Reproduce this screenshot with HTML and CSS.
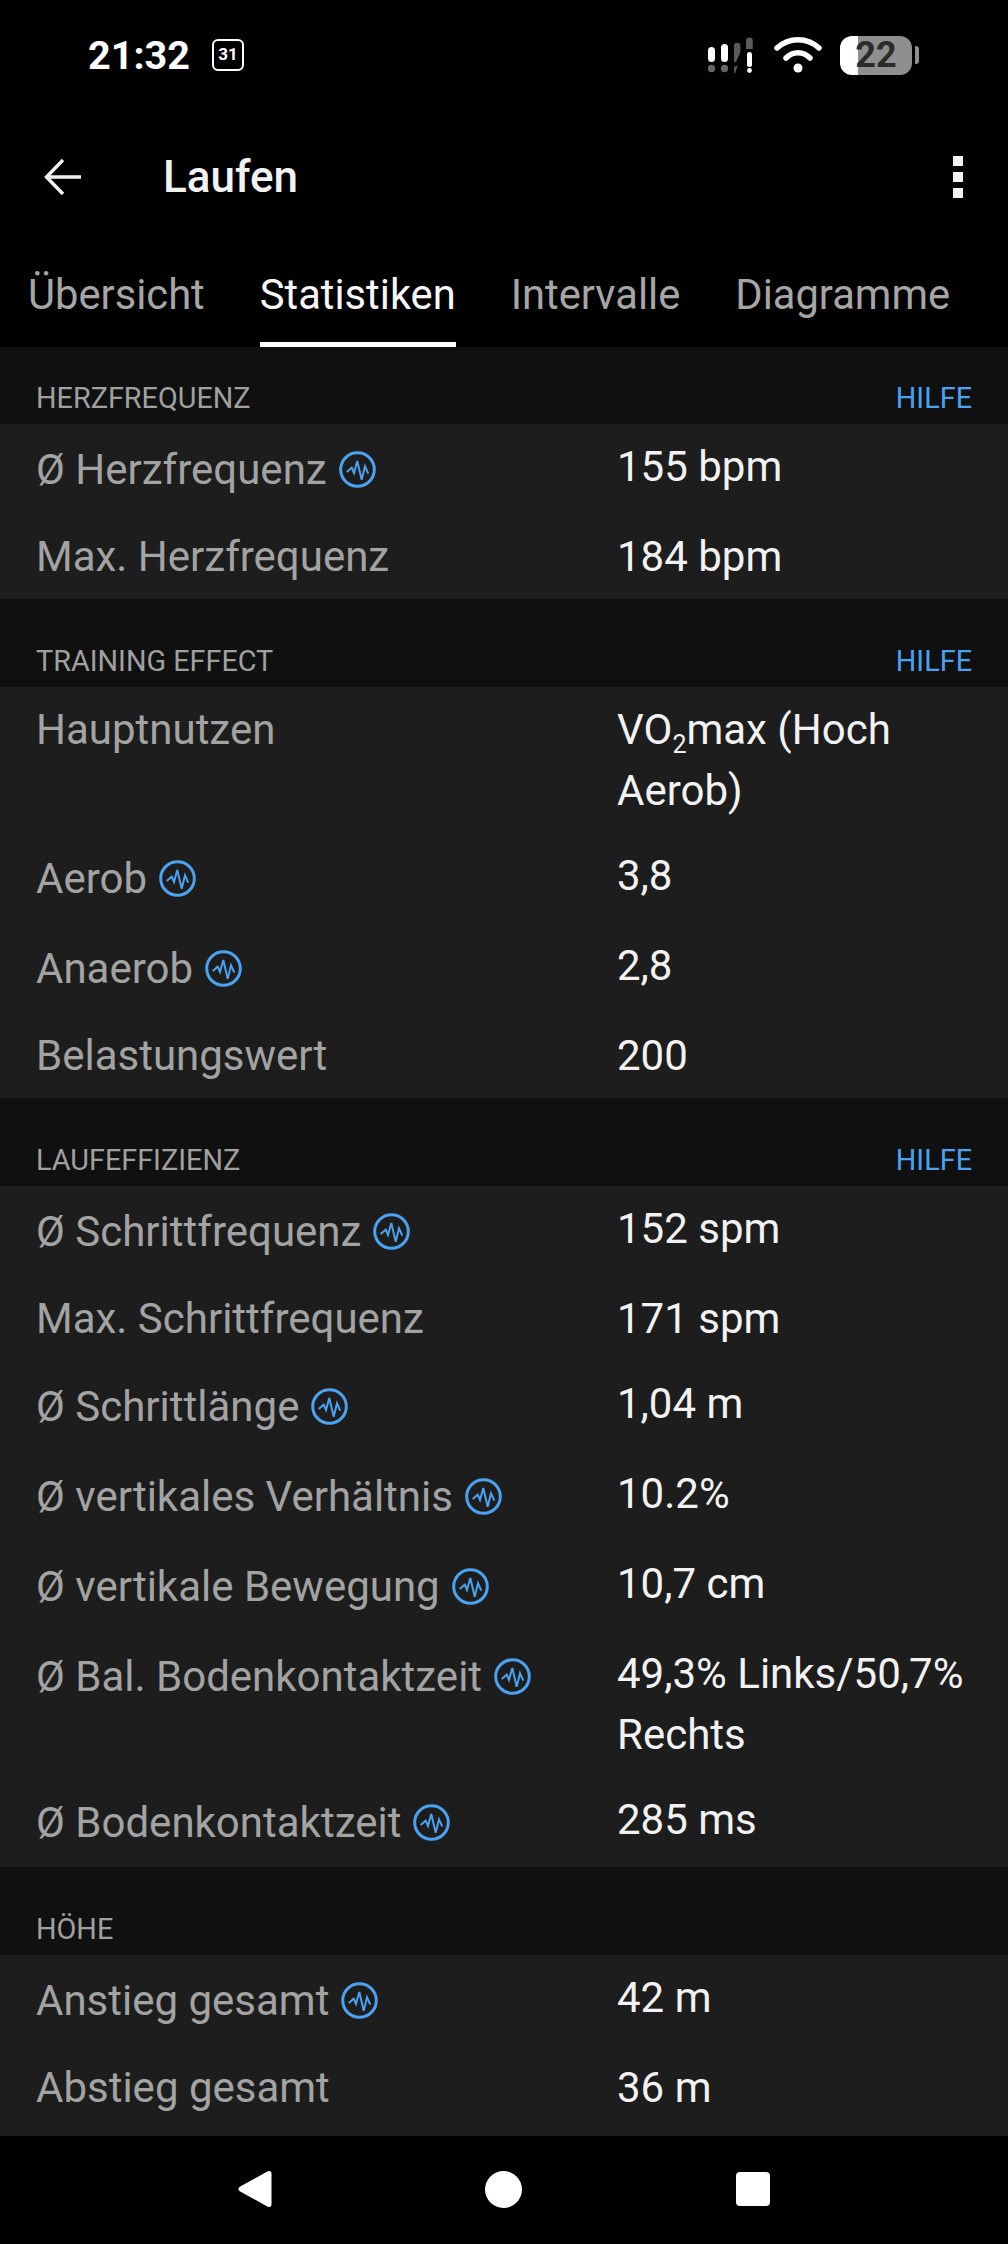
FILE: index.html
```html
<!DOCTYPE html>
<html lang="de">
<head>
    <meta charset="UTF-8">
    <meta name="viewport" content="width=device-width, initial-scale=1.0">
    <title>Laufen</title>
    <link rel="stylesheet" href="styles.css">
</head>
<body>
    <svg class="defs" width="0" height="0">
        <symbol id="pulse" viewBox="0 0 37 37">
            <circle cx="18.5" cy="18.5" r="16.8" fill="none" stroke="currentColor" stroke-width="3"/>
            <path d="M7.7 21 12.7 16.7 15 22 18.3 10 22.7 28.7 26 15.3 29.3 22.7" fill="none" stroke="currentColor" stroke-width="2"/>
        </symbol>
    </svg>

    <div class="phone">
        <div class="status-bar">
            <span class="clock">21:32</span>
            <span class="calendar">31</span>
            <div class="status-icons">
                <svg class="signal" width="46" height="36" viewBox="709 38 46 36">
                    <rect x="709" y="48" width="7" height="15" rx="3.5" fill="#fff"/>
                    <rect x="722" y="45" width="7" height="18" rx="3.5" fill="#fff"/>
                    <circle cx="712.5" cy="69.5" r="3.7" fill="#666"/>
                    <circle cx="725.5" cy="69.5" r="3.7" fill="#666"/>
                    <path d="M735 63V47a3.2 3.2 0 0 1 6.4 0V53L737 63ZM739 66 736 74H735V68Z" fill="#5a5a5a"/>
                    <path d="M747 50V42a3.4 3.4 0 0 1 6.8 0V50Z" fill="#5a5a5a"/>
                    <rect x="748" y="53" width="5" height="15" rx="2.5" fill="#fff"/>
                    <circle cx="750.5" cy="71.5" r="2.4" fill="#fff"/>
                </svg>
                <svg class="wifi" width="48" height="36" viewBox="0 0 48 36">
                    <path d="M3 11C15 0 33 0 45 11" fill="none" stroke="#fff" stroke-width="5.5" stroke-linecap="round"/>
                    <path d="M12 21C19 14 29 14 36 21" fill="none" stroke="#fff" stroke-width="5.5" stroke-linecap="round"/>
                    <circle cx="24" cy="31" r="4.5" fill="#fff"/>
                </svg>
                <div class="battery">22</div>
                <span class="battery-tip"></span>
            </div>
        </div>

        <div class="toolbar">
            <svg class="back" width="38" height="38" viewBox="0 0 38 38">
                <path d="M37 19H3M19 2 2.5 19 19 36" fill="none" stroke="#f2f2f2" stroke-width="3.4"/>
            </svg>
            <span class="toolbar-title">Laufen</span>
            <div class="menu-dots"><i></i><i></i><i></i></div>
        </div>

        <div class="tabs">
            <div class="tab">Übersicht</div>
            <div class="tab active">Statistiken</div>
            <div class="tab">Intervalle</div>
            <div class="tab">Diagramme</div>
        </div>

        <div class="content">
            <section class="section">
                <div class="section-head"><span>HERZFREQUENZ</span><a class="help">HILFE</a></div>
                <div class="row">
                    <div class="label has-icon">Ø Herzfrequenz <svg class="pulse"><use href="#pulse"/></svg></div>
                    <div class="value">155 bpm</div>
                </div>
                <div class="row">
                    <div class="label">Max. Herzfrequenz</div>
                    <div class="value">184 bpm</div>
                </div>
            </section>

            <section class="section">
                <div class="section-head"><span>TRAINING EFFECT</span><a class="help">HILFE</a></div>
                <div class="row">
                    <div class="label">Hauptnutzen</div>
                    <div class="value">VO<sub>2</sub>max (Hoch Aerob)</div>
                </div>
                <div class="row">
                    <div class="label has-icon">Aerob <svg class="pulse"><use href="#pulse"/></svg></div>
                    <div class="value">3,8</div>
                </div>
                <div class="row">
                    <div class="label has-icon">Anaerob <svg class="pulse"><use href="#pulse"/></svg></div>
                    <div class="value">2,8</div>
                </div>
                <div class="row">
                    <div class="label">Belastungswert</div>
                    <div class="value">200</div>
                </div>
            </section>

            <section class="section">
                <div class="section-head"><span>LAUFEFFIZIENZ</span><a class="help">HILFE</a></div>
                <div class="row">
                    <div class="label has-icon">Ø Schrittfrequenz <svg class="pulse"><use href="#pulse"/></svg></div>
                    <div class="value">152 spm</div>
                </div>
                <div class="row">
                    <div class="label">Max. Schrittfrequenz</div>
                    <div class="value">171 spm</div>
                </div>
                <div class="row">
                    <div class="label has-icon">Ø Schrittlänge <svg class="pulse"><use href="#pulse"/></svg></div>
                    <div class="value">1,04 m</div>
                </div>
                <div class="row">
                    <div class="label has-icon">Ø vertikales Verhältnis <svg class="pulse"><use href="#pulse"/></svg></div>
                    <div class="value">10.2%</div>
                </div>
                <div class="row">
                    <div class="label has-icon">Ø vertikale Bewegung <svg class="pulse"><use href="#pulse"/></svg></div>
                    <div class="value">10,7 cm</div>
                </div>
                <div class="row">
                    <div class="label has-icon">Ø Bal. Bodenkontaktzeit <svg class="pulse"><use href="#pulse"/></svg></div>
                    <div class="value">49,3% Links/50,7% Rechts</div>
                </div>
                <div class="row">
                    <div class="label has-icon">Ø Bodenkontaktzeit <svg class="pulse"><use href="#pulse"/></svg></div>
                    <div class="value">285 ms</div>
                </div>
            </section>

            <section class="section">
                <div class="section-head"><span>HÖHE</span></div>
                <div class="row">
                    <div class="label has-icon">Anstieg gesamt <svg class="pulse"><use href="#pulse"/></svg></div>
                    <div class="value">42 m</div>
                </div>
                <div class="row">
                    <div class="label">Abstieg gesamt</div>
                    <div class="value">36 m</div>
                </div>
            </section>
        </div>

        <div class="nav-bar">
            <svg width="34" height="38" viewBox="0 0 34 38">
                <path d="M31 3.5 3 19 31 34.5Z" fill="#fff" stroke="#fff" stroke-width="5" stroke-linejoin="round"/>
            </svg>
            <span class="nav-home"></span>
            <span class="nav-recent"></span>
        </div>
    </div>
</body>
</html>
```

FILE: styles.css
```css
* {
    box-sizing: border-box;
}
body {
    margin: 0;
    background-color: black;
    font-family: Roboto, "Noto Sans", sans-serif;
    color: #f2f2f2;
}
.defs {
    position: absolute;
}
.phone {
    display: flex;
    flex-direction: column;
    width: 1008px;
    height: 2244px;
    overflow: hidden;
}

/* Statusleiste */
.status-bar {
    display: flex;
    align-items: center;
    flex: none;
    height: 110px;
    padding-left: 88px;
}
.clock {
    font-size: 39.6px;
    font-weight: 700;
    color: white;
}
.calendar {
    width: 32px;
    height: 32px;
    margin-left: 22px;
    border: 2.5px solid white;
    border-radius: 6px;
    text-align: center;
    font-size: 17px;
    font-weight: 700;
    line-height: 27px;
    color: white;
}
.status-icons {
    display: flex;
    align-items: center;
    margin-left: auto;
    padding-right: 89px;
}
.wifi {
    margin-left: 20px;
}
.battery {
    width: 72px;
    height: 39px;
    margin-left: 18px;
    border-radius: 12px;
    background: linear-gradient(to right, white 18px, #8f8f8f 18px);
    text-align: center;
    font-size: 36px;
    font-weight: 700;
    line-height: 39px;
    color: #2b2b2b;
}
.battery-tip {
    width: 4px;
    height: 18px;
    margin-left: 3px;
    border-radius: 0 3px 3px 0;
    background-color: #8f8f8f;
}

/* Toolbar */
.toolbar {
    display: flex;
    align-items: center;
    flex: none;
    height: 134px;
    padding: 0 45px 0 44px;
}
.toolbar-title {
    margin-left: 81px;
    font-size: 44px;
    font-weight: 500;
}
.menu-dots {
    display: flex;
    flex-direction: column;
    gap: 6px;
    margin-left: auto;
}
.menu-dots i {
    width: 10px;
    height: 10px;
    background-color: #f2f2f2;
}

/* Tabs */
.tabs {
    display: flex;
    flex: none;
    gap: 55px;
    height: 103px;
    padding-left: 28px;
}
.tab {
    padding-top: 26px;
    font-size: 41.7px;
    line-height: 50px;
    color: #a6a6a6;
    white-space: nowrap;
}
.tab.active {
    border-bottom: 5px solid white;
    color: #f7f7f7;
}

/* Liste */
.content {
    flex: 1;
    min-height: 0;
    overflow: hidden;
    background-color: #1d1d1d;
}
.section-head {
    display: flex;
    justify-content: space-between;
    padding: 42px 36px 6px;
    background-color: #101010;
    font-size: 28.8px;
    line-height: 40px;
    color: #a0a0a0;
}
.section:first-child .section-head {
    padding-top: 31px;
}
.help {
    color: #4aa3f0;
}
.row {
    display: grid;
    grid-template-columns: 581px 1fr;
    align-items: start;
    padding: 12px 36px;
    font-size: 42px;
    line-height: 61px;
}
.label {
    display: flex;
    align-items: center;
    gap: 12px;
    color: #a3a3a3;
    white-space: nowrap;
}
.label.has-icon {
    min-height: 66px;
}
.value {
    color: #f2f2f2;
}
.value sub {
    font-size: 25px;
    line-height: 0;
    vertical-align: -9px;
}
.pulse {
    flex: none;
    width: 37px;
    height: 37px;
    color: #4aa3f0;
}

/* Navigationsleiste */
.nav-bar {
    display: flex;
    align-items: center;
    flex: none;
    height: 108px;
    padding-bottom: 2px;
    padding-left: 238px;
}
.nav-home {
    width: 37px;
    height: 37px;
    margin-left: 213px;
    border-radius: 50%;
    background-color: white;
}
.nav-recent {
    width: 34px;
    height: 34px;
    margin-left: 214px;
    border-radius: 4px;
    background-color: white;
}
```
